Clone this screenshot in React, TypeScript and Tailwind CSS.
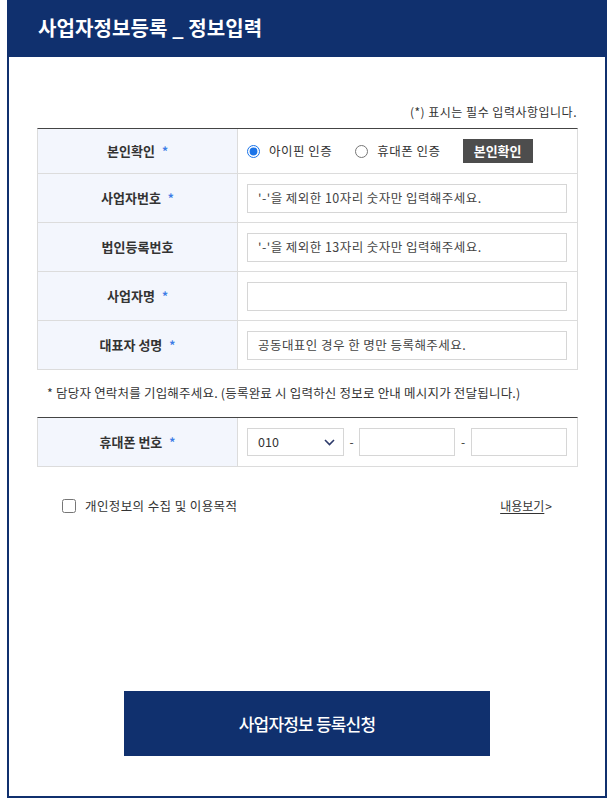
import React from "react";

const font = { fontFamily: '"Noto Sans CJK KR", "Noto Sans", sans-serif' };

function Star() {
  return <span className="ml-[7px] text-[12px] font-bold text-[#3d7ce6]">*</span>;
}

function Label({ children, star = true }: { children: React.ReactNode; star?: boolean }) {
  return (
    <div className="w-[200px] shrink-0 self-stretch flex items-center justify-center bg-[#f3f6fd] border-r border-[#dcdcdc] text-[13px] font-bold text-[#333] tracking-[0px]">
      {children}
      {star && <Star />}
    </div>
  );
}

function TextInput({ placeholder }: { placeholder?: string }) {
  return (
    <div className="w-[320px] h-[29px] border border-[#d6d6d6] bg-white flex items-center pl-[10px] text-[12.5px] text-[#444] tracking-[0.45px]">
      {placeholder}
    </div>
  );
}

function Row({ label, star = true, h = "h-[49px]", children }: { label: string; star?: boolean; h?: string; children: React.ReactNode }) {
  return (
    <div className={`flex ${h} border-b border-[#dcdcdc]`}>
      <Label star={star}>{label}</Label>
      <div className="flex-1 flex items-center pl-[9px]">{children}</div>
    </div>
  );
}

export default function App() {
  return (
    <div style={font} className="ml-[7px] w-[600px] h-[798px] bg-[#10306e] flex flex-col">
      <div className="h-[57px] shrink-0 flex items-center pl-[31px] pb-[2px]">
        <h1 className="text-white text-[20px] font-bold tracking-[0.1px]">사업자정보등록 _ 정보입력</h1>
      </div>
      <div className="mx-[2px] mb-[2px] flex-1 bg-white flex flex-col px-[28px]">
        <div className="pt-[47px] h-[71px] text-right text-[12px] leading-[16px] text-[#333] tracking-[0.5px] pr-0">
          (*) 표시는 필수 입력사항입니다.
        </div>
        <div className="w-[541px] border-t border-[#444] border-x border-x-[#dcdcdc]">
          <Row label="본인확인" h="h-[45px]">
            <label className="flex items-center">
              <input type="radio" name="auth" defaultChecked className="m-0 w-[13px] h-[13px] accent-[#1a73e8]" />
              <span className="ml-[9px] text-[12.5px] text-[#333] tracking-[0.5px]">아이핀 인증</span>
            </label>
            <label className="flex items-center ml-[23px]">
              <input type="radio" name="auth" className="m-0 w-[13px] h-[13px]" />
              <span className="ml-[9px] text-[12.5px] text-[#333] tracking-[0.5px]">휴대폰 인증</span>
            </label>
            <div className="ml-[22px] w-[70px] h-[24px] bg-[#4d4d4d] text-white text-[13px] font-bold flex items-center justify-center">
              본인확인
            </div>
          </Row>
          <Row label="사업자번호">
            <TextInput placeholder="'-'을 제외한 10자리 숫자만 입력해주세요." />
          </Row>
          <Row label="법인등록번호" star={false}>
            <TextInput placeholder="'-'을 제외한 13자리 숫자만 입력해주세요." />
          </Row>
          <Row label="사업자명">
            <TextInput />
          </Row>
          <Row label="대표자 성명">
            <TextInput placeholder="공동대표인 경우 한 명만 등록해주세요." />
          </Row>
        </div>
        <div className="h-[47px] flex items-center pl-[10px] text-[12.5px] text-[#333] tracking-[0.2px]">
          * 담당자 연락처를 기입해주세요. (등록완료 시 입력하신 정보로 안내 메시지가 전달됩니다.)
        </div>
        <div className="w-[541px] border-t border-[#444] border-x border-x-[#dcdcdc]">
          <Row label="휴대폰 번호">
            <div className="w-[97px] h-[28px] shrink-0 border border-[#d6d6d6] flex items-center justify-between pl-[10px] pr-[8px] text-[12.5px] text-[#333]">
              <span>010</span>
              <svg width="11" height="7" viewBox="0 0 11 7" fill="none">
                <path d="M1 1l4.5 4.5L10 1" stroke="#2d3a6a" strokeWidth="1.6" />
              </svg>
            </div>
            <span className="w-[15px] shrink-0 text-center text-[12px] text-[#333]">-</span>
            <div className="w-[96px] h-[28px] shrink-0 border border-[#d6d6d6]" />
            <span className="w-[16px] shrink-0 text-center text-[12px] text-[#333]">-</span>
            <div className="w-[96px] h-[28px] shrink-0 border border-[#d6d6d6]" />
          </Row>
        </div>
        <div className="mt-[30px] flex items-center justify-between pl-[25px] pr-[25px]">
          <label className="flex items-center">
            <input type="checkbox" className="m-0 w-[14px] h-[14px]" />
            <span className="ml-[9px] text-[12.5px] text-[#333] tracking-[0.4px]">개인정보의 수집 및 이용목적</span>
          </label>
          <span className="text-[12px] text-[#333] flex items-center">
            <span className="underline underline-offset-2">내용보기</span>
            <span className="ml-[1px]">&gt;</span>
          </span>
        </div>
        <div className="flex-1" />
        <div className="mb-[40px] self-center w-[366px] h-[65px] bg-[#10306e] flex items-center justify-center text-white text-[17px] font-medium tracking-[-0.8px]">
          사업자정보 등록신청
        </div>
      </div>
    </div>
  );
}
